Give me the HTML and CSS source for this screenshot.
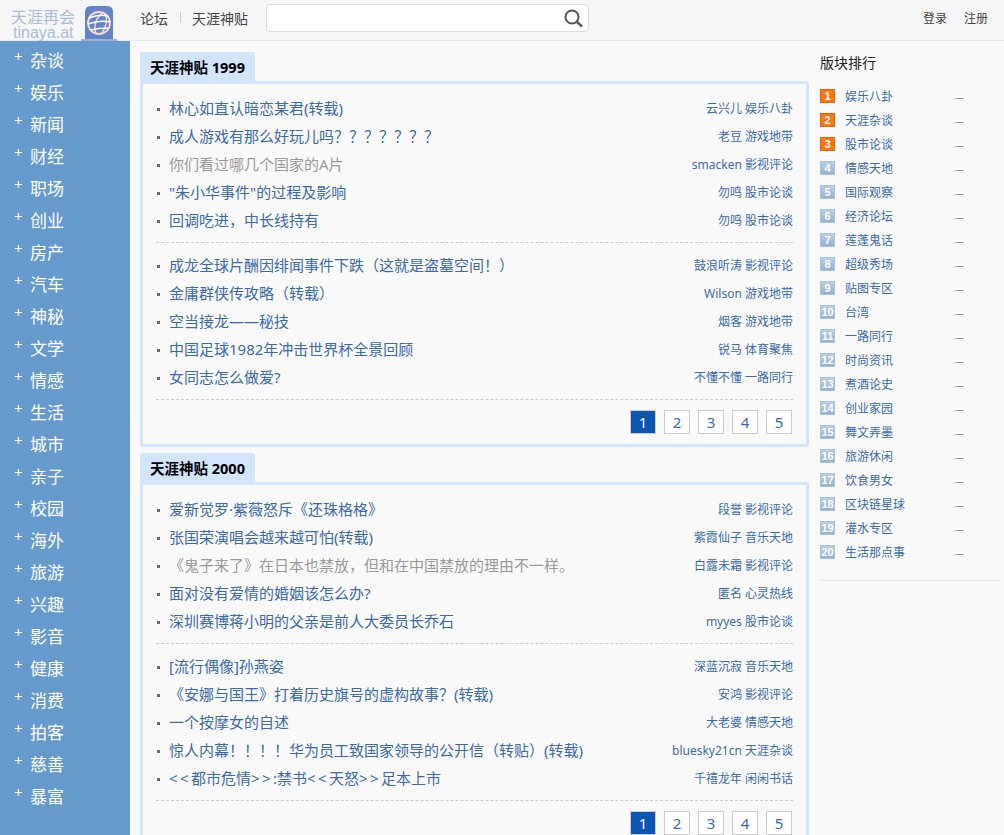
FILE: index.html

```html
<!DOCTYPE html>
<html lang="zh-CN">
<head>
  <meta charset="UTF-8" />
  <title>天涯神贴</title>
  <link rel="stylesheet" href="styles.css">
</head>
<body>
  <header class="topbar">
    <div class="logo">
      <div class="logo-text">
        <span class="logo-cn">天涯再会</span>
        <span class="logo-en">tinaya.at</span>
      </div>
      <svg class="logo-globe" width="36" height="35" viewBox="0 0 36 35">
        <path d="M4 6 Q4 0 10 0 H26 Q32 0 32 6 V33 H4 Z" fill="#6584c6" />
        <rect x="0" y="33" width="36" height="2" fill="#9fb2d2" />
        <circle cx="18" cy="17" r="11" fill="none" stroke="#f6dcd8" stroke-width="1.8" />
        <path d="M22 6.5 Q11 15 15 28 M25 9 Q27 18 21 27" fill="none" stroke="#f6dcd8" stroke-width="1.4" />
        <path d="M8 12 Q18 8 27 10 M7 18 Q18 14 29 16 M9 24 Q18 22 27 22" fill="none" stroke="#fff" stroke-width="1.5" />
      </svg>
    </div>
    <nav class="topnav">
      <a href="#">论坛</a>
      <span class="topnav-sep"></span>
      <a href="#">天涯神贴</a>
    </nav>
    <div class="search">
      <svg width="22" height="20" viewBox="0 0 22 20">
        <circle cx="9" cy="9" r="6.5" fill="none" stroke="#555" stroke-width="2" />
        <path d="M14 14 L19 18.5" stroke="#555" stroke-width="2.4" />
      </svg>
    </div>
    <div class="account">
      <a href="#">登录</a>
      <a href="#">注册</a>
    </div>
  </header>

  <div class="layout">
    <ul class="sidenav">
      <li><a href="#">杂谈</a></li>
      <li><a href="#">娱乐</a></li>
      <li><a href="#">新闻</a></li>
      <li><a href="#">财经</a></li>
      <li><a href="#">职场</a></li>
      <li><a href="#">创业</a></li>
      <li><a href="#">房产</a></li>
      <li><a href="#">汽车</a></li>
      <li><a href="#">神秘</a></li>
      <li><a href="#">文学</a></li>
      <li><a href="#">情感</a></li>
      <li><a href="#">生活</a></li>
      <li><a href="#">城市</a></li>
      <li><a href="#">亲子</a></li>
      <li><a href="#">校园</a></li>
      <li><a href="#">海外</a></li>
      <li><a href="#">旅游</a></li>
      <li><a href="#">兴趣</a></li>
      <li><a href="#">影音</a></li>
      <li><a href="#">健康</a></li>
      <li><a href="#">消费</a></li>
      <li><a href="#">拍客</a></li>
      <li><a href="#">慈善</a></li>
      <li><a href="#">暴富</a></li>
    </ul>

    <main class="content">
      <section class="year">
        <h2 class="year-tab">天涯神贴 1999</h2>
        <div class="year-box">
          <ul class="posts">
            <li><a href="#">林心如直认暗恋某君(转载)</a><span class="meta">云兴儿 娱乐八卦</span></li>
            <li><a href="#">成人游戏有那么好玩儿吗？？？？？？？</a><span class="meta">老豆 游戏地带</span></li>
            <li><a href="#" class="visited">你们看过哪几个国家的A片</a><span class="meta">smacken 影视评论</span></li>
            <li><a href="#">"朱小华事件"的过程及影响</a><span class="meta">勿鸣 股市论谈</span></li>
            <li><a href="#">回调吃进，中长线持有</a><span class="meta">勿鸣 股市论谈</span></li>
          </ul>
          <ul class="posts">
            <li><a href="#">成龙全球片酬因绯闻事件下跌（这就是盗墓空间！）</a><span class="meta">鼓浪听涛 影视评论</span></li>
            <li><a href="#">金庸群侠传攻略（转载）</a><span class="meta">Wilson 游戏地带</span></li>
            <li><a href="#">空当接龙——秘技</a><span class="meta">烟客 游戏地带</span></li>
            <li><a href="#">中国足球1982年冲击世界杯全景回顾</a><span class="meta">锐马 体育聚焦</span></li>
            <li><a href="#">女同志怎么做爱?</a><span class="meta">不懂不懂 一路同行</span></li>
          </ul>
          <div class="pager">
            <a href="#" class="current">1</a>
            <a href="#">2</a>
            <a href="#">3</a>
            <a href="#">4</a>
            <a href="#">5</a>
          </div>
        </div>
      </section>

      <section class="year">
        <h2 class="year-tab">天涯神贴 2000</h2>
        <div class="year-box">
          <ul class="posts">
            <li><a href="#">爱新觉罗·紫薇怒斥《还珠格格》</a><span class="meta">段誉 影视评论</span></li>
            <li><a href="#">张国荣演唱会越来越可怕(转载)</a><span class="meta">紫霞仙子 音乐天地</span></li>
            <li><a href="#" class="visited">《鬼子来了》在日本也禁放，但和在中国禁放的理由不一样。</a><span class="meta">白露未霜 影视评论</span></li>
            <li><a href="#">面对没有爱情的婚姻该怎么办?</a><span class="meta">匿名 心灵热线</span></li>
            <li><a href="#">深圳赛博蒋小明的父亲是前人大委员长乔石</a><span class="meta">myyes 股市论谈</span></li>
          </ul>
          <ul class="posts">
            <li><a href="#">[流行偶像]孙燕姿</a><span class="meta">深蓝沉寂 音乐天地</span></li>
            <li><a href="#">《安娜与国王》打着历史旗号的虚构故事？(转载)</a><span class="meta">安鸿 影视评论</span></li>
            <li><a href="#">一个按摩女的自述</a><span class="meta">大老婆 情感天地</span></li>
            <li><a href="#">惊人内幕！！！！华为员工致国家领导的公开信（转贴）(转载)</a><span class="meta">bluesky21cn 天涯杂谈</span></li>
            <li><a href="#"><span class="angle">&lt;&lt;</span>都市危情<span class="angle">&gt;&gt;</span>:禁书<span class="angle">&lt;&lt;</span>天怒<span class="angle">&gt;&gt;</span>足本上市</a><span class="meta">千禧龙年 闲闲书话</span></li>
          </ul>
          <div class="pager">
            <a href="#" class="current">1</a>
            <a href="#">2</a>
            <a href="#">3</a>
            <a href="#">4</a>
            <a href="#">5</a>
          </div>
        </div>
      </section>
    </main>

    <aside class="rank">
      <h3 class="rank-title">版块排行</h3>
      <ol class="rank-list">
        <li><span class="badge hot">1</span><a href="#">娱乐八卦</a><span class="dash">–</span></li>
        <li><span class="badge hot">2</span><a href="#">天涯杂谈</a><span class="dash">–</span></li>
        <li><span class="badge hot">3</span><a href="#">股市论谈</a><span class="dash">–</span></li>
        <li><span class="badge">4</span><a href="#">情感天地</a><span class="dash">–</span></li>
        <li><span class="badge">5</span><a href="#">国际观察</a><span class="dash">–</span></li>
        <li><span class="badge">6</span><a href="#">经济论坛</a><span class="dash">–</span></li>
        <li><span class="badge">7</span><a href="#">莲蓬鬼话</a><span class="dash">–</span></li>
        <li><span class="badge">8</span><a href="#">超级秀场</a><span class="dash">–</span></li>
        <li><span class="badge">9</span><a href="#">贴图专区</a><span class="dash">–</span></li>
        <li><span class="badge">10</span><a href="#">台湾</a><span class="dash">–</span></li>
        <li><span class="badge">11</span><a href="#">一路同行</a><span class="dash">–</span></li>
        <li><span class="badge">12</span><a href="#">时尚资讯</a><span class="dash">–</span></li>
        <li><span class="badge">13</span><a href="#">煮酒论史</a><span class="dash">–</span></li>
        <li><span class="badge">14</span><a href="#">创业家园</a><span class="dash">–</span></li>
        <li><span class="badge">15</span><a href="#">舞文弄墨</a><span class="dash">–</span></li>
        <li><span class="badge">16</span><a href="#">旅游休闲</a><span class="dash">–</span></li>
        <li><span class="badge">17</span><a href="#">饮食男女</a><span class="dash">–</span></li>
        <li><span class="badge">18</span><a href="#">区块链星球</a><span class="dash">–</span></li>
        <li><span class="badge">19</span><a href="#">灌水专区</a><span class="dash">–</span></li>
        <li><span class="badge">20</span><a href="#">生活那点事</a><span class="dash">–</span></li>
      </ol>
    </aside>
  </div>
</body>
</html>
```

FILE: styles.css

```css
html, body {
  height: 100%;
  overflow: hidden;
}

body {
  margin: 0;
  font-family: "Noto Sans", "Noto Sans CJK SC", sans-serif;
  font-size: 14px;
  color: #333;
  background-color: #f9f9f9;
}

a {
  color: #3a69ad;
  text-decoration: none;
}

ul, ol {
  list-style: none;
  margin: 0;
  padding: 0;
}

/* top bar */
.topbar {
  display: flex;
  align-items: center;
  height: 35px;
  padding-bottom: 5px;
  background-color: #f6f6f6;
  border-bottom: 1px solid #e8e8e8;
}

.logo {
  display: flex;
  align-items: flex-start;
  align-self: flex-start;
  width: 140px;
  height: 40px;
  padding-left: 11px;
  box-sizing: border-box;
}

.logo-text {
  display: flex;
  flex-direction: column;
  width: 70px;
  margin-top: 10px;
  color: #a9bcdc;
}

.logo-cn {
  font-size: 16px;
  line-height: 15px;
}

.logo-en {
  padding-left: 2px;
  font-family: "Liberation Sans", sans-serif;
  font-size: 16px;
  line-height: 15px;
}

.logo-globe {
  margin-top: 6px;
}

.topnav {
  display: flex;
  align-items: center;
  width: 126px;
}

.topnav a {
  color: #444;
}

.topnav-sep {
  width: 1px;
  height: 11px;
  margin: 0 11px 0 12px;
  background-color: #ccc;
}

.search {
  display: flex;
  align-items: center;
  justify-content: flex-end;
  width: 318px;
  height: 26px;
  padding-right: 3px;
  background-color: #fff;
  border: 1px solid #ddd;
  border-radius: 4px;
}

.account {
  display: flex;
  gap: 17px;
  margin-left: auto;
  padding-right: 16px;
  font-size: 12px;
}

.account a {
  color: #444;
}

/* page columns */
.layout {
  display: flex;
  height: 794px;
}

.sidenav {
  flex: none;
  width: 130px;
  padding-top: 4px;
  background-color: #6699cc;
}

.sidenav li {
  position: relative;
  height: 32px;
  padding-left: 30px;
  font-size: 17px;
  line-height: 32px;
}

.sidenav li::before {
  content: "+";
  position: absolute;
  left: 14px;
  top: -5px;
  font-size: 15px;
  color: #fff;
}

.sidenav a {
  color: #fff;
}

.content {
  flex: none;
  width: 669px;
  margin-left: 10px;
  padding-top: 11px;
}

/* year panels */
.year {
  margin-bottom: 6px;
}

.year-tab {
  width: fit-content;
  height: 29px;
  margin: 0;
  padding: 0 10px;
  font-size: 14.5px;
  line-height: 30px;
  color: #000;
  background-color: #d3e4ff;
  border-radius: 3px 3px 0 0;
}

.year-box {
  padding: 11px 13px 10px;
  background-color: #f9f9f9;
  border: 3px solid #d3e4ff;
  border-radius: 0 3px 3px 3px;
}

.posts {
  padding-bottom: 7px;
  margin-bottom: 9px;
  border-bottom: 1px dashed #ccc;
}

.posts li {
  position: relative;
  display: flex;
  justify-content: space-between;
  height: 28px;
  padding-left: 13px;
  font-size: 15px;
  line-height: 28px;
}

.posts li::before {
  content: "";
  position: absolute;
  left: 1px;
  top: 13px;
  width: 3px;
  height: 3px;
  background-color: #666;
}

.posts li > a {
  margin-top: -1px;
}

.posts a.visited {
  color: #999;
}

.angle {
  letter-spacing: 2.4px;
}

.meta {
  font-size: 12px;
  color: #3a69ad;
}

.pager {
  display: flex;
  justify-content: flex-end;
  gap: 8px;
  margin-top: 10px;
  padding-right: 1px;
}

.pager a {
  width: 24px;
  height: 22px;
  font-size: 15px;
  line-height: 22px;
  text-align: center;
  background-color: #fff;
  border: 1px solid #ccc;
}

.pager a.current {
  color: #fff;
  background-color: #0a56b0;
}

/* right column */
.rank {
  flex: none;
  width: 180px;
  height: 539px;
  margin-left: 11px;
  border-bottom: 1px solid #e8e8e8;
}

.rank-title {
  margin: 13px 0 12px;
  font-size: 14px;
  font-weight: normal;
  line-height: 18px;
  color: #222;
}

.rank-list li {
  display: flex;
  align-items: center;
  height: 24px;
  font-size: 12px;
}

.rank-list a {
  width: 110px;
  color: #3a69ad;
}

.badge {
  flex: none;
  width: 13px;
  height: 12px;
  margin-right: 10px;
  font-family: "Liberation Sans", sans-serif;
  font-size: 11px;
  font-weight: bold;
  line-height: 12px;
  text-align: center;
  color: #fff;
  background: linear-gradient(#b9cfe6, #8fb2d4);
  border: 1px solid #a9c3dc;
}

.badge.hot {
  background: #f4790f;
  border-color: #e8610c;
}

.dash {
  font-family: "Liberation Sans", sans-serif;
  font-size: 15px;
  color: #999;
}
```
